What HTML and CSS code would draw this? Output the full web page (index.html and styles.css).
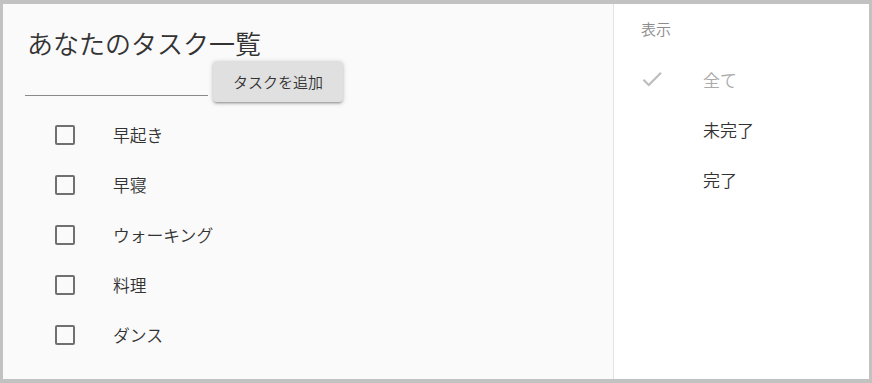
FILE: index.html
```html
<!DOCTYPE html>
<html lang="ja">
<head>
<meta charset="utf-8">
<title>あなたのタスク一覧</title>
<link rel="stylesheet" href="styles.css">
</head>
<body>
<div class="frame">
  <main class="tasks">
    <h1 class="title">あなたのタスク一覧</h1>
    <div class="add-row">
      <div class="field"></div>
      <button class="add-btn">タスクを追加</button>
    </div>
    <ul class="task-list">
      <li class="task"><span class="box"></span><span class="label">早起き</span></li>
      <li class="task"><span class="box"></span><span class="label">早寝</span></li>
      <li class="task"><span class="box"></span><span class="label">ウォーキング</span></li>
      <li class="task"><span class="box"></span><span class="label">料理</span></li>
      <li class="task"><span class="box"></span><span class="label">ダンス</span></li>
    </ul>
  </main>
  <aside class="filter">
    <div class="subheader">表示</div>
    <ul class="menu">
      <li class="item disabled">
        <svg class="check" viewBox="0 0 24 24"><path d="M9 16.17L4.83 12l-1.42 1.41L9 19 21 7l-1.41-1.41z"/></svg>
        <span class="item-text">全て</span>
      </li>
      <li class="item"><span class="check"></span><span class="item-text">未完了</span></li>
      <li class="item"><span class="check"></span><span class="item-text">完了</span></li>
    </ul>
  </aside>
</div>
</body>
</html>
```
FILE: styles.css
```css
* { box-sizing: border-box; }
html, body {
  margin: 0;
  padding: 0;
  background: #ffffff;
}
body {
  font-family: "Noto Sans CJK JP", sans-serif;
  font-weight: 350;
  color: #333333;
}
.frame {
  width: 872px;
  height: 383px;
  border-style: solid;
  border-color: #c2c2c2;
  border-width: 4px 3px 4px 3px;
  display: flex;
  overflow: hidden;
}
.tasks {
  width: 611px;
  background: #fafafa;
  border-right: 1px solid #e3e3e3;
  padding: 23px 0 0 22px;
}
.title {
  margin: 0;
  padding-left: 2px;
  font-size: 26px;
  font-weight: 350;
  line-height: 32px;
  color: #333333;
}
.add-row {
  display: flex;
  align-items: flex-start;
  margin-top: 2px;
}
.field {
  width: 183px;
  height: 35px;
  border-bottom: 1px solid #8a8a8a;
}
.add-btn {
  margin-left: 5px;
  width: 130px;
  height: 41px;
  border: none;
  border-radius: 4px;
  background: #e0e0e0;
  font-family: "Noto Sans CJK JP", sans-serif;
  font-weight: 350;
  font-size: 15px;
  color: #333333;
  padding: 0;
  box-shadow: 0 1px 5px rgba(0,0,0,0.2), 0 2px 2px rgba(0,0,0,0.14), 0 3px 1px -2px rgba(0,0,0,0.12);
}
.task-list {
  list-style: none;
  margin: 8px 0 0 0;
  padding: 0;
}
.task {
  height: 50px;
  display: flex;
  align-items: center;
  padding-left: 30px;
}
.box {
  width: 20px;
  height: 20px;
  border: 2px solid #707070;
  border-radius: 2px;
}
.label {
  margin-left: 38px;
  font-size: 16.8px;
  color: #333333;
}
.filter {
  flex: 1;
  background: #ffffff;
  padding: 12px 0 0 27px;
}
.subheader {
  font-size: 15px;
  line-height: 26px;
  color: #8c8c8c;
}
.menu {
  list-style: none;
  margin: 12px 0 0 -2px;
  padding: 0;
}
.item {
  height: 50px;
  display: flex;
  align-items: center;
  font-size: 17px;
  color: #333333;
}
.check {
  width: 26px;
  height: 26px;
  flex: none;
  fill: #bdbdbd;
}
.item-text {
  margin-left: 38px;
}
.item.disabled .item-text {
  color: #aaaaaa;
}
```
